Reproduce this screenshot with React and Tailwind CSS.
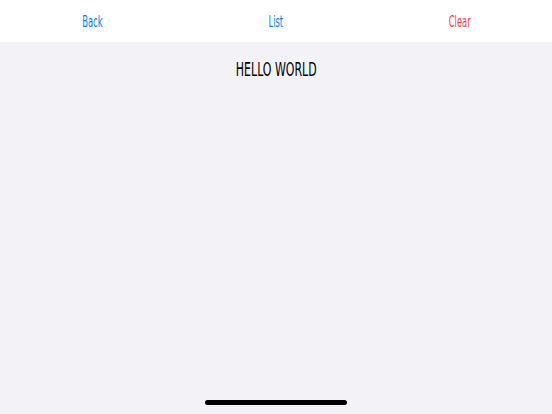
import React from "react";

export default function App() {
  const font = { fontFamily: '"DejaVu Sans Condensed", "Liberation Sans", sans-serif' };
  return (
    <div className="flex h-[414px] w-[552px] flex-col bg-[#f2f2f7]" style={font}>
      <div className="grid h-[42px] grid-cols-3 items-center bg-white pt-[3px] text-[15px]">
        <button className="text-center text-[#007aff]">
          <span className="inline-block scale-x-[0.62]">Back</span>
        </button>
        <button className="text-center text-[#007aff]">
          <span className="inline-block scale-x-[0.62]">List</span>
        </button>
        <button className="text-center text-[#ff3b30]">
          <span className="inline-block scale-x-[0.62]">Clear</span>
        </button>
      </div>
      <div className="flex flex-1 flex-col items-center">
        <h1 className="mt-[15px] inline-block scale-x-[0.61] text-[20px] leading-[24px] text-black">
          HELLO WORLD
        </h1>
      </div>
      <div className="flex justify-center pb-[9px]">
        <div className="h-[5px] w-[142px] rounded-full bg-black" />
      </div>
    </div>
  );
}
